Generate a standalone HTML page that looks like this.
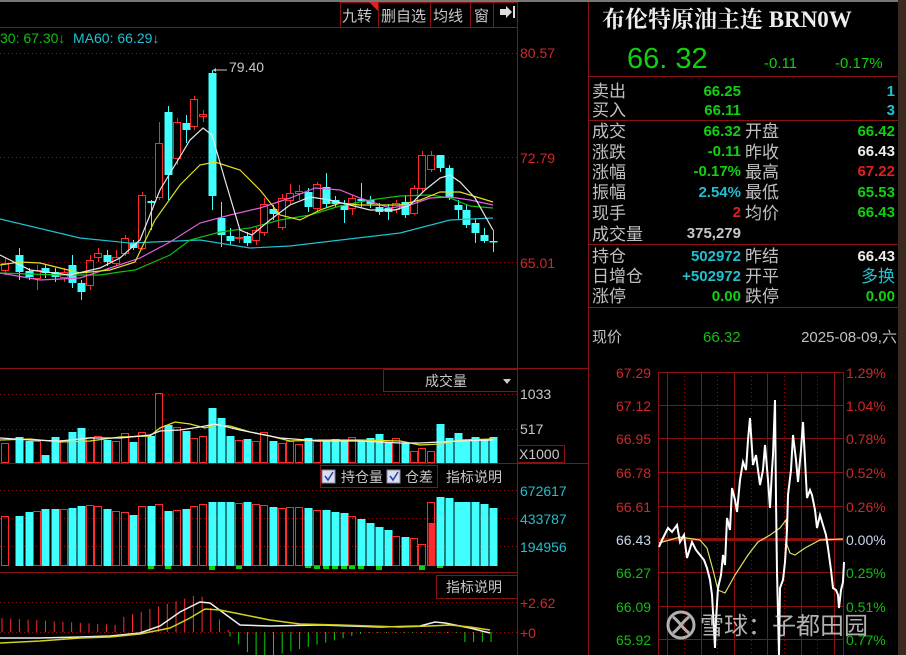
<!DOCTYPE html>
<html><head><meta charset="utf-8"><style>
html,body{margin:0;padding:0;background:#000;width:906px;height:655px;overflow:hidden}
svg{display:block}
text{font-family:"Liberation Sans","Noto Sans CJK SC",sans-serif}
.cn{font-family:"Noto Sans CJK SC","WenQuanYi Zen Hei",sans-serif}
text.serif{font-family:"Liberation Serif","Noto Serif CJK SC",serif}
</style></head><body>
<svg id="s" width="906" height="655" viewBox="0 0 906 655" xmlns="http://www.w3.org/2000/svg">
<rect width="906" height="655" fill="#000"/>
<rect x="0" y="0" width="906" height="2" fill="#777"/>
<rect x="898" y="0" width="8" height="655" fill="#3a2a20"/>
<g stroke="#8b1010" stroke-width="1" fill="none">
<line x1="517.5" y1="2" x2="517.5" y2="655"/>
<line x1="588.5" y1="2" x2="588.5" y2="655"/>
<line x1="0" y1="27.5" x2="517" y2="27.5"/>
<line x1="0" y1="368.5" x2="588" y2="368.5"/>
<line x1="0" y1="463.5" x2="588" y2="463.5"/>
<line x1="0" y1="572.5" x2="517" y2="572.5"/>
<line x1="588" y1="76.5" x2="898" y2="76.5"/>
<line x1="588" y1="120.5" x2="898" y2="120.5"/>
<line x1="588" y1="244.5" x2="898" y2="244.5"/>
<line x1="588" y1="307.5" x2="898" y2="307.5"/>
<rect x="340.5" y="2.5" width="38" height="25"/><rect x="378.5" y="2.5" width="52" height="25"/>
<rect x="430.5" y="2.5" width="40" height="25"/><rect x="470.5" y="2.5" width="23" height="25"/>
<rect x="493.5" y="2.5" width="24" height="25"/>
<rect x="383.5" y="369.5" width="134" height="22"/>
<rect x="517.5" y="445.5" width="47" height="17"/>
<rect x="320.5" y="465.5" width="117" height="22"/>
<rect x="436.5" y="575.5" width="81" height="23"/>
</g>
<polygon points="369,2 378,2 378,11" fill="#e02020"/>
<g fill="#c8c8c8" font-size="15" class="cn">
<text x="342" y="21" class="cn">九转</text><text x="381" y="21" class="cn">删自选</text>
<text x="433" y="21" class="cn">均线</text><text x="474" y="21" class="cn">窗</text>
<text x="425" y="386" class="cn" font-size="14">成交量</text>
<text x="341" y="482" class="cn" font-size="14">持仓量</text><text x="405" y="482" class="cn" font-size="14">仓差</text>
<text x="446" y="482" class="cn" font-size="14">指标说明</text>
<text x="446" y="592" class="cn" font-size="14">指标说明</text>
</g>
<path d="M500 9h6v-3l6 6-6 6v-3h-6z M513 6h2v12h-2z" fill="#ddd"/>
<path d="M503 379h8l-4 5z" fill="#ccc"/>
<rect x="322" y="470" width="13" height="13" fill="#dde" stroke="#88a"/><path d="M325 476l3 4 5-8" stroke="#24a" fill="none" stroke-width="1.5"/>
<rect x="387" y="470" width="13" height="13" fill="#dde" stroke="#88a"/><path d="M390 476l3 4 5-8" stroke="#24a" fill="none" stroke-width="1.5"/>
<g stroke="#8b1010" stroke-dasharray="1,3">
<line x1="0" y1="53.5" x2="517" y2="53.5"/><line x1="0" y1="157.5" x2="517" y2="157.5"/><line x1="0" y1="262.5" x2="517" y2="262.5"/>
<line x1="0" y1="394.5" x2="517" y2="394.5"/><line x1="0" y1="429.5" x2="517" y2="429.5"/>
<line x1="0" y1="490.5" x2="517" y2="490.5"/><line x1="0" y1="518.5" x2="517" y2="518.5"/><line x1="0" y1="546.5" x2="517" y2="546.5"/>
<line x1="0" y1="602.5" x2="517" y2="602.5"/><line x1="0" y1="632.5" x2="517" y2="632.5"/>
</g>
<g font-size="14">
<text x="520" y="58" fill="#d02828">80.57</text><text x="520" y="163" fill="#d02828">72.79</text><text x="520" y="268" fill="#d02828">65.01</text>
<text x="520" y="399" fill="#c8c8c8">1033</text><text x="520" y="434" fill="#c8c8c8">517</text><text x="519" y="459" fill="#c8c8c8">X1000</text>
<text x="520" y="496" fill="#20c0d0">672617</text><text x="520" y="524" fill="#20c0d0">433787</text><text x="520" y="552" fill="#20c0d0">194956</text>
<text x="520" y="608" fill="#d02828">+2.62</text><text x="520" y="638" fill="#d02828">+0</text>
<text x="0" y="43" fill="#10c010">30: 67.30↓</text><text x="73" y="43" fill="#20c0d0">MA60: 66.29↓</text>
<text x="229" y="72" fill="#c8c8c8">79.40</text>
</g>
<path d="M213 70h14" stroke="#c8c8c8"/><path d="M213 70l3-2v4z" fill="#c8c8c8"/>
<g id="cand"></g><g id="ma" fill="none" stroke-width="1.2"></g>
<g id="vol"></g><g id="oi"></g><g id="macd"></g>
<!-- right panel -->
<text x="602" y="27" class="serif" font-weight="bold" font-size="23" fill="#eee">布伦特原油主连 BRN0W</text>
<text x="627" y="68" font-size="29" fill="#10d010">66. 32</text>
<text x="764" y="68" font-size="15" fill="#10d010">-0.11</text><text x="835" y="68" font-size="15" fill="#10d010">-0.17%</text>
<g font-size="17" fill="#c0c0c0" class="cn">
<text x="592" y="97">卖出</text><text x="592" y="116">买入</text>
<text x="592" y="137">成交</text><text x="592" y="158">涨跌</text><text x="592" y="178">涨幅</text><text x="592" y="198">振幅</text><text x="592" y="219">现手</text><text x="592" y="240">成交量</text>
<text x="592" y="262">持仓</text><text x="592" y="282">日增仓</text><text x="592" y="302">涨停</text>
<text x="745" y="137">开盘</text><text x="745" y="158">昨收</text><text x="745" y="178">最高</text><text x="745" y="198">最低</text><text x="745" y="219">均价</text>
<text x="745" y="262">昨结</text><text x="745" y="282">开平</text><text x="745" y="302">跌停</text>
<text x="592" y="342" font-size="15">现价</text>
</g>
<g font-size="15" font-weight="bold" text-anchor="end">
<text x="741" y="96" fill="#10d010">66.25</text><text x="741" y="115" fill="#10d010">66.11</text>
<text x="895" y="96" fill="#20c0d0">1</text><text x="895" y="115" fill="#20c0d0">3</text>
<text x="741" y="136" fill="#10d010">66.32</text><text x="741" y="156" fill="#10d010">-0.11</text><text x="741" y="176" fill="#10d010">-0.17%</text>
<text x="741" y="197" fill="#20c0d0">2.54%</text><text x="741" y="217" fill="#e02020">2</text><text x="741" y="238" fill="#c8c8c8">375,279</text>
<text x="741" y="261" fill="#20c0d0">502972</text><text x="741" y="281" fill="#20c0d0">+502972</text><text x="741" y="301" fill="#10d010">0.00</text>
<text x="895" y="136" fill="#10d010">66.42</text><text x="895" y="156" fill="#eee">66.43</text><text x="895" y="176" fill="#e02020">67.22</text>
<text x="895" y="197" fill="#10d010">65.53</text><text x="895" y="217" fill="#10d010">66.43</text>
<text x="895" y="261" fill="#eee">66.43</text><text x="895" y="301" fill="#10d010">0.00</text>
</g>
<text x="895" y="282" font-size="17" fill="#20c0d0" text-anchor="end" class="cn">多换</text>
<text x="703" y="342" font-size="15" fill="#10c010">66.32</text>
<text x="897" y="342" font-size="15" fill="#c0c0c0" text-anchor="end">2025-08-09,<tspan class="cn">六</tspan></text>
<!-- intraday -->
<g id="intra"></g>
<g font-size="14">
<text x="616" y="378" fill="#d02828">67.29</text><text x="616" y="411" fill="#d02828">67.12</text><text x="616" y="444" fill="#d02828">66.95</text>
<text x="616" y="478" fill="#d02828">66.78</text><text x="616" y="512" fill="#d02828">66.61</text><text x="616" y="545" fill="#c8d8f0">66.43</text>
<text x="616" y="578" fill="#10c010">66.27</text><text x="616" y="612" fill="#10c010">66.09</text><text x="616" y="645" fill="#10c010">65.92</text>
<text x="846" y="378" fill="#d02828">1.29%</text><text x="846" y="411" fill="#d02828">1.04%</text><text x="846" y="444" fill="#d02828">0.78%</text>
<text x="846" y="478" fill="#d02828">0.52%</text><text x="846" y="512" fill="#d02828">0.26%</text><text x="846" y="545" fill="#c8d8f0">0.00%</text>
<text x="846" y="578" fill="#10c010">0.25%</text><text x="846" y="612" fill="#10c010">0.51%</text><text x="846" y="645" fill="#10c010">0.77%</text>
</g>
<g opacity="0.8">
<circle cx="681" cy="625" r="13" fill="none" stroke="#ddd" stroke-width="3"/>
<path d="M673 617c6 4 10 12 16 16M689 617c-6 4-10 12-16 16" stroke="#ddd" stroke-width="3" fill="none"/>
<text x="700" y="634" font-size="24" fill="#ddd" class="cn">雪球：子都田园</text>
</g>
</svg>
<script>
var NS="http://www.w3.org/2000/svg";
function el(p,t,a){var e=document.createElementNS(NS,t);for(var k in a)e.setAttribute(k,a[k]);document.getElementById(p).appendChild(e);return e;}
var R="#ff2a2a",C="#40ffff";
var c=[[5,263,270,258,275,1],[19,255,272,248,280,0],[29,271,277,268,280,0],[37,270,278,265,290,1],[45,268,273,265,278,0],[55,272,277,268,282,0],[64,272,277,268,282,1],[72,265,283,255,288,0],[81,283,292,280,300,0],[90,260,285,255,290,1],[98,253,257,248,262,1],[107,255,262,250,266,0],[116,257,263,250,266,1],[125,238,253,235,256,1],[133,243,248,240,250,0],[142,195,248,192,250,1],[151,201,203,200,230,0],[159,143,197,122,200,1],[168,112,175,106,200,0],[177,122,158,118,165,1],[186,123,130,115,143,0],[194,99,126,96,130,1],[203,114,116,110,122,1],[212,73,196,70,210,0],[221,218,235,202,247,0],[230,236,241,228,245,0],[239,237,238,228,243,1],[247,236,243,232,246,0],[256,230,240,226,245,1],[264,204,232,198,236,1],[273,209,214,205,220,0],[282,198,227,194,230,1],[290,193,200,184,204,1],[299,191,193,185,200,1],[308,192,207,188,212,0],[317,184,208,182,212,1],[326,187,204,173,207,0],[335,200,204,196,208,0],[344,205,210,200,223,0],[352,198,208,195,215,1],[361,199,201,183,207,0],[370,200,204,196,208,0],[379,207,212,203,215,0],[388,208,212,204,220,0],[396,203,209,200,213,1],[405,202,215,195,218,0],[414,188,213,185,215,1],[422,155,188,151,192,1],[431,155,169,151,172,1],[440,155,168,155,172,0],[449,168,197,165,200,0],[458,205,210,200,220,0],[466,210,225,205,228,0],[475,223,233,218,243,0],[484,235,241,228,243,0],[493,241,242,230,252,0]];
c.forEach(function(d){var col=d[5]?R:C;
el("cand","line",{x1:d[0]+.5,x2:d[0]+.5,y1:d[3],y2:d[4],stroke:col});
if(d[5])el("cand","rect",{x:d[0]-3.5,y:d[1]+.5,width:7,height:Math.max(1,d[2]-d[1]),fill:"#000",stroke:col});
else el("cand","rect",{x:d[0]-3.5,y:d[1],width:8,height:Math.max(1.5,d[2]-d[1]),fill:col});});
function pl(g,pts,col,w){el(g,"polyline",{points:pts,stroke:col,fill:"none","stroke-width":w||1.2});}
pl("ma","0,219 80,238 130,243 200,240 250,248 290,246 400,233 450,220 493,218","#20c0d0");
pl("ma","0,273 60,275 100,275 120,272 135,270 170,255 190,240 220,232 250,228 280,220 310,215 340,206 370,200 400,196 430,195 450,198 470,206 493,208","#10c010");
pl("ma","0,273 40,280 80,278 110,268 140,258 170,242 200,223 230,215 260,208 290,198 315,188 340,190 360,198 390,208 410,205 430,198 450,197 470,200 493,205","#e060e0");
pl("ma","0,265 20,262 40,263 60,268 80,273 110,270 135,262 155,220 180,185 200,165 215,162 240,170 260,190 280,215 300,220 320,210 340,203 360,205 380,205 400,205 420,200 440,192 460,192 493,202","#e0e020");
pl("ma","0,255 30,270 70,275 100,268 120,258 140,240 160,190 190,140 203,128 212,135 225,180 240,230 252,235 270,220 290,205 310,197 330,200 350,205 370,210 395,210 410,205 425,190 440,178 450,175 460,182 475,198 493,230","#e8e8e8");
var vt=[443,437,441,441,455,437,440,432,428,437,436,440,441,433,442,432,436,393,425,427,431,438,436,408,418,436,440,439,441,432,441,443,441,444,438,441,440,439,441,437,441,438,434,443,438,443,451,448,451,424,438,433,441,437,439,437];
c.forEach(function(d,i){var col=d[5]?R:C;var t=vt[i]||440;
if(d[5])el("vol","rect",{x:d[0]-3.5,y:t+.5,width:7,height:463-t-1,fill:"none",stroke:col});
else el("vol","rect",{x:d[0]-3.5,y:t,width:8,height:463-t,fill:col});});
pl("vol","0,440 30,439 60,442 90,441 120,437 150,436 160,428 175,422 190,424 205,428 215,425 230,426 250,432 270,436 290,441 320,440 360,440 400,441 420,445 440,444 460,440 493,439","#e0e020",1.3);
pl("vol","0,438 30,440 60,441 90,438 120,438 150,435 160,431 180,430 200,427 215,424 240,430 260,434 280,438 320,441 360,441 400,443 420,443 440,442 460,441 493,440","#f0f0f0",1.3);
var ot=[516,516,512,511,509,509,509,508,506,505,506,509,511,512,515,506,506,504,511,510,509,506,504,502,502,502,503,502,504,505,507,508,507,507,508,510,510,512,513,516,519,523,527,530,536,537,538,544,502,497,498,502,502,502,504,508];
c.forEach(function(d,i){var col=d[5]?R:C;var t=ot[i]||505;
if(d[5])el("oi","rect",{x:d[0]-3.5,y:t+.5,width:7,height:566-t-1,fill:"none",stroke:col});
else el("oi","rect",{x:d[0]-3.5,y:t,width:8,height:566-t,fill:col});});
el("oi","rect",{x:428.5,y:523,width:7,height:43,fill:R});
[[151,3],[168,3],[212,4],[239,3],[308,2],[317,3],[326,3],[335,3],[344,3],[352,3],[361,3],[379,4],[422,4],[440,2]].forEach(function(a){el("oi","rect",{x:a[0]-3,y:566,width:6,height:a[1],fill:"#10d010"});});
for(var x=2;x<230;x+=8.7){var h=x<120?(14-x*0.06):(x<200?(14+(x-120)*0.3):Math.max(2,38-(x-200)*1.3));el("macd","line",{x1:x,x2:x,y1:632,y2:632-h,stroke:R});}
for(var x=230;x<495;x+=8.7){var h=x<260?(x-225)*0.9:Math.max(1,27-(x-260)*0.25);if(x>460)h=10;el("macd","line",{x1:x,x2:x,y1:632,y2:632+h,stroke:"#10d010"});}
pl("macd","0,638 40,638 80,637 110,636 140,633 160,626 180,612 200,602 210,603 225,614 240,625 270,626 320,625 380,627 420,626 435,622 445,623 470,628 490,633","#f0f0f0",1.5);
pl("macd","0,643 40,641 80,638 110,637 140,634 170,628 190,618 205,609 220,610 240,614 270,620 300,624 340,625 400,627 430,626 450,625 470,627 490,630","#d0d020",1.5);
var ig="intra";
[372,405,438,472,506,572,606,639].forEach(function(y){el(ig,"line",{x1:658,x2:843,y1:y+.5,y2:y+.5,stroke:"#8b1010"});});
el(ig,"rect",{x:658,y:538,width:185,height:3,fill:"#8b1010"});
[658,667,701,734,767,801,834,843].forEach(function(x){el(ig,"line",{x1:x+.5,x2:x+.5,y1:372,y2:655,stroke:"#8b1010"});});
[684,717,751,784,817].forEach(function(x){el(ig,"line",{x1:x+.5,x2:x+.5,y1:372,y2:655,stroke:"#8b1010","stroke-dasharray":"1,3"});});
pl(ig,"659,543 680,537 700,540 707,548 713,570 718,590 725,593 735,575 748,555 758,542 770,535 780,528 786,520 787,545 790,553 795,555 805,548 820,540 843,539","#e0e060",1.2);
pl(ig,"659,547 662,540 668,528 672,532 677,525 680,542 684,535 687,558 692,542 696,550 700,555 704,560 707,568 710,580 712,595 714,630 715,648 716,620 718,588 721,575 723,555 725,565 727,518 730,530 732,488 735,500 737,512 740,480 743,462 746,470 748,440 750,418 753,465 756,455 760,485 763,470 765,445 768,480 770,508 772,470 773,455 775,400 776,500 777,572 779,655 780,588 783,580 785,562 787,530 788,495 791,470 793,435 796,460 798,482 801,450 803,422 805,460 807,498 810,490 812,495 815,510 817,528 820,515 823,525 826,535 828,548 831,570 833,588 836,590 838,595 839,608 841,590 843,582 844,562","#fff",2);
</script>
</body></html>
